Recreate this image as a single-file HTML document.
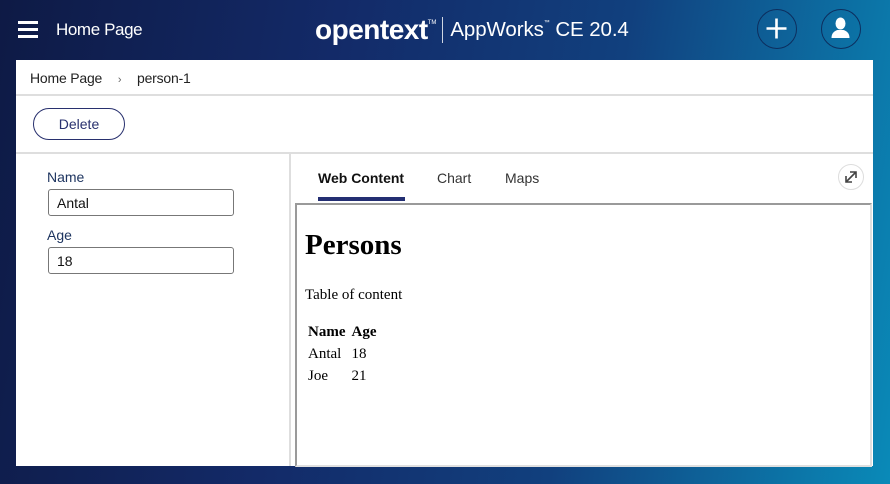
<!DOCTYPE html>
<html><head><meta charset="utf-8"><style>
*{box-sizing:border-box;margin:0;padding:0}
body{width:890px;height:484px;overflow:hidden;position:relative;font-family:"Liberation Sans",sans-serif;
background:linear-gradient(100deg,#0e1a45 0%,#132a68 35%,#11407e 65%,#0a8ab8 100%);}
.abs{position:absolute}
.ham{left:18px;top:21px;width:20px;height:16px}
.ham i{display:block;height:2.5px;background:#fff;margin-bottom:4.5px}
.hp{left:56px;top:20px;color:#fff;font-size:17px;letter-spacing:-0.4px}
.logo{left:315px;top:14px;color:#fff;white-space:nowrap}
.logo b{font-size:28px;font-weight:bold;letter-spacing:-0.5px;vertical-align:middle}
.logo sup{font-size:6px;vertical-align:top;position:relative;top:6px}
.logo .bar{display:inline-block;width:1px;height:26px;background:#fff;vertical-align:middle;margin:0 7px 0 6px;opacity:.8}
.logo span.a{font-size:20.5px;vertical-align:middle;letter-spacing:-0.1px}
.circ{width:40px;height:40px;border-radius:50%;border:1.5px solid #0d2e5e;top:9px}
.panel{left:16px;top:60px;width:857px;height:406px;background:#fff}
.bc{left:30px;top:70px;font-size:14px;color:#222;letter-spacing:-0.2px}
.line{background:#dedede}
.btn{left:33px;top:108px;width:92px;height:32px;border:1px solid #28306e;border-radius:16px;font-size:14px;color:#28306e;text-align:center;line-height:30px}
.lbl{font-size:14px;color:#1e3560;left:47px}
.inp{left:48px;width:186px;height:27px;border:1px solid #777;border-radius:3px;font-size:14px;color:#111;padding:5px 8px}
.tab{top:170px;font-size:14px;color:#333}
.frame{left:295px;top:203px;width:577px;height:264px;border:2px solid;border-color:#9a9a9a #e0e0e0 #e0e0e0 #9a9a9a;font-family:"Liberation Serif",serif;color:#000}
td{padding:0 2px;font-size:15px;height:22px}
</style></head><body>
<div class="abs ham"><i></i><i></i><i></i></div>
<div class="abs hp">Home Page</div>
<div class="abs logo"><b>opentext</b><sup>TM</sup><span class="bar"></span><span class="a">AppWorks</span><sup>™</sup><span class="a"> CE 20.4</span></div>
<div class="abs circ" style="left:757px">
<svg width="37" height="37" viewBox="0 0 37 37"><path d="M18.5 8.5v20M8.5 18.5h20" stroke="#fff" stroke-width="2.6"/></svg></div>
<div class="abs circ" style="left:821px">
<svg width="37" height="37" viewBox="0 0 37 37"><ellipse cx="18.5" cy="13.5" rx="5" ry="6" fill="#fff"/><path d="M9.5 28c0-5 3-7 6-8h6c3 1 6 3 6 8z" fill="#fff"/></svg></div>
<div class="abs panel"></div>
<div class="abs bc">Home Page <span style="margin:0 12px 0 12px;color:#666;font-size:11px">›</span> person-1</div>
<div class="abs line" style="left:16px;top:94px;width:857px;height:2px"></div>
<div class="abs btn">Delete</div>
<div class="abs line" style="left:16px;top:152px;width:857px;height:2px"></div>
<div class="abs line" style="left:289px;top:154px;width:2px;height:312px"></div>
<div class="abs lbl" style="top:169px">Name</div>
<div class="abs inp" style="top:189px">Antal</div>
<div class="abs lbl" style="top:227px">Age</div>
<div class="abs inp" style="top:247px">18</div>
<div class="abs tab" style="left:318px;font-weight:bold;color:#111">Web Content</div>
<div class="abs" style="left:318px;top:197px;width:87px;height:4px;background:#232e72"></div>
<div class="abs tab" style="left:437px">Chart</div>
<div class="abs tab" style="left:505px">Maps</div>
<div class="abs" style="left:838px;top:164px;width:26px;height:26px;border-radius:50%;border:1px solid #ddd">
<svg width="24" height="24" viewBox="0 0 24 24"><path d="M7 17L17 7M11 7h6v6M7 11v6h6" stroke="#444" stroke-width="1.6" fill="none"/></svg></div>
<div class="abs frame">
<div style="position:absolute;left:8px;top:24px;font-size:29px;font-weight:bold">Persons</div>
<div style="position:absolute;left:8px;top:82px;font-size:15px">Table of content</div>
<table style="position:absolute;left:7px;top:116px;border-collapse:separate;border-spacing:2px 0">
<tr><td><b>Name</b></td><td><b>Age</b></td></tr>
<tr><td>Antal</td><td>18</td></tr>
<tr><td>Joe</td><td>21</td></tr>
</table></div>
</body></html>
